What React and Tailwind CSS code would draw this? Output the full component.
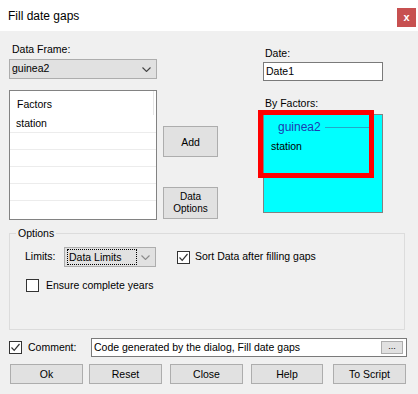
import React from 'react';

const FONT = { fontFamily: '"Liberation Sans", Arial, sans-serif' };

function Chevron({ light }) {
  return (
    <svg width="9" height="5" viewBox="0 0 9 5" className="shrink-0">
      <path d="M0.5 0.5 L4.5 4.5 L8.5 0.5" fill="none" stroke={light ? '#8a8a8a' : '#444'} strokeWidth="1.1" />
    </svg>
  );
}

function CheckBox({ checked }) {
  return (
    <div className="w-[13px] h-[13px] border border-[#333] bg-white flex items-center justify-center shrink-0">
      {checked && (
        <svg width="11" height="11" viewBox="0 0 11 11">
          <path d="M1.5 5.5 L4.2 8.3 L9.5 2" fill="none" stroke="#333" strokeWidth="1.2" />
        </svg>
      )}
    </div>
  );
}

function Btn({ children, className }) {
  return (
    <div className={`bg-[#e1e1e1] border border-[#adadad] flex items-center justify-center text-[10.5px] text-black leading-[12px] text-center ${className}`}>
      {children}
    </div>
  );
}

export default function App() {
  return (
    <div className="w-[418px] h-[394px] bg-[#f0f0f0] text-[10.5px] text-black overflow-hidden" style={FONT}>
      {/* ── Title bar ── */}
      <div className="h-[31px] bg-white flex items-center justify-between pl-2 pr-[2px]">
        <span className="text-[12px] mt-[1px]">Fill date gaps</span>
        <div className="w-[19px] h-[19px] bg-[#c75050] text-white text-[11px] font-bold flex items-center justify-center mb-[-4px] leading-none">
          x
        </div>
      </div>

      {/* ── Top section ── */}
      <div className="flex pl-[9px]">
        {/* left column */}
        <div className="w-[148px] pt-[12px]">
          <div className="leading-[13px] pl-[3px]">Data Frame:</div>
          <div className="mt-[3px] h-[20px] bg-[#e1e1e1] border border-[#adadad] flex items-center justify-between pl-[2px] pr-[5px]">
            <span>guinea2</span>
            <Chevron />
          </div>
          <div className="mt-[11px] h-[130px] bg-white border border-[#828282] relative">
            <div className="absolute right-[2px] top-0 h-[24px] w-px bg-[#e5e5e5]" />
            <div className="h-[25px] flex items-center pl-[7px] pt-[3px]">Factors</div>
            <div className="h-[17px] flex items-center pl-[6px] border-b border-[#ececec]">station</div>
            <div className="h-[17px] border-b border-[#ececec]" />
            <div className="h-[17px] border-b border-[#ececec]" />
            <div className="h-[17px] border-b border-[#ececec]" />
            <div className="h-[17px] border-b border-[#ececec]" />
          </div>
        </div>

        {/* middle buttons */}
        <div className="w-[55px] ml-[6px] pt-[95px]">
          <Btn className="h-[31px]">Add</Btn>
          <Btn className="h-[32px] mt-[30px] text-[10px] leading-[12px]">
            Data
            <br />
            Options
          </Btn>
        </div>

        {/* right column */}
        <div className="w-[120px] ml-[45px] pt-[16px]">
          <div className="leading-[13px] pl-[2px]">Date:</div>
          <div className="mt-[2px] h-[19px] bg-white border border-[#7a7a7a] flex items-center pl-[2px]">Date1</div>
          <div className="mt-[16px] leading-[13px] pl-[2px]">By Factors:</div>
          <div className="mt-[4px] h-[99px] bg-[#00ffff] border border-[#828282] relative">
            <div className="flex items-center mt-[5px] pl-[14px]">
              <span className="text-[12px] text-[#1c3bb0] leading-[14px]">guinea2</span>
              <div className="ml-[4px] h-px w-[45px] bg-[#22a8c8]" />
            </div>
            <div className="pl-[7px] mt-[6px] leading-[13px]">station</div>
            <div className="absolute left-[-6px] top-[-5px] w-[116px] h-[68px] border-[5px] border-[#ff0000]" />
          </div>
        </div>
      </div>

      {/* ── Options group ── */}
      <div className="mx-[9px] mt-[13px] h-[97px] w-[396px] border border-[#dcdcdc] relative">
        <span className="absolute left-[6px] top-[-7px] bg-[#f0f0f0] px-[2px] leading-[13px]">Options</span>
        <div className="flex items-center pt-[13px] pl-[15px]">
          <span className="w-[39px]">Limits:</span>
          <div className="w-[92px] h-[20px] bg-[#e1e1e1] border border-[#adadad] flex items-center justify-between pl-[2px] pr-[5px]">
            <span className="border border-dotted border-black px-[1px] h-[16px] leading-[14px] w-[70px]">Data Limits</span>
            <Chevron light />
          </div>
          <div className="ml-[21px] flex items-center">
            <CheckBox checked />
            <span className="ml-[5px]">Sort Data after filling gaps</span>
          </div>
        </div>
        <div className="flex items-center mt-[11px] pl-[16px]">
          <CheckBox />
          <span className="ml-[7px]">Ensure complete years</span>
        </div>
      </div>

      {/* ── Comment row ── */}
      <div className="flex items-center mt-[8px] pl-[9px]">
        <CheckBox checked />
        <span className="ml-[6px] w-[63px]">Comment:</span>
        <div className="w-[316px] h-[19px] bg-white border border-[#7a7a7a] flex items-center justify-between pl-[2px] pr-[3px]">
          <span>Code generated by the dialog, Fill date gaps</span>
          <div className="w-[22px] h-[13px] bg-[#e1e1e1] border border-[#adadad] flex items-center justify-center text-[9px] leading-none pb-[3px]">
            ...
          </div>
        </div>
      </div>

      {/* ── Buttons row ── */}
      <div className="flex mt-[7px] pl-[10px]">
        <Btn className="w-[73px] h-[20px]">Ok</Btn>
        <Btn className="w-[73px] h-[20px] ml-[6px]">Reset</Btn>
        <Btn className="w-[73px] h-[20px] ml-[8px]">Close</Btn>
        <Btn className="w-[72px] h-[20px] ml-[8px]">Help</Btn>
        <Btn className="w-[73px] h-[20px] ml-[10px]">To Script</Btn>
      </div>
    </div>
  );
}
